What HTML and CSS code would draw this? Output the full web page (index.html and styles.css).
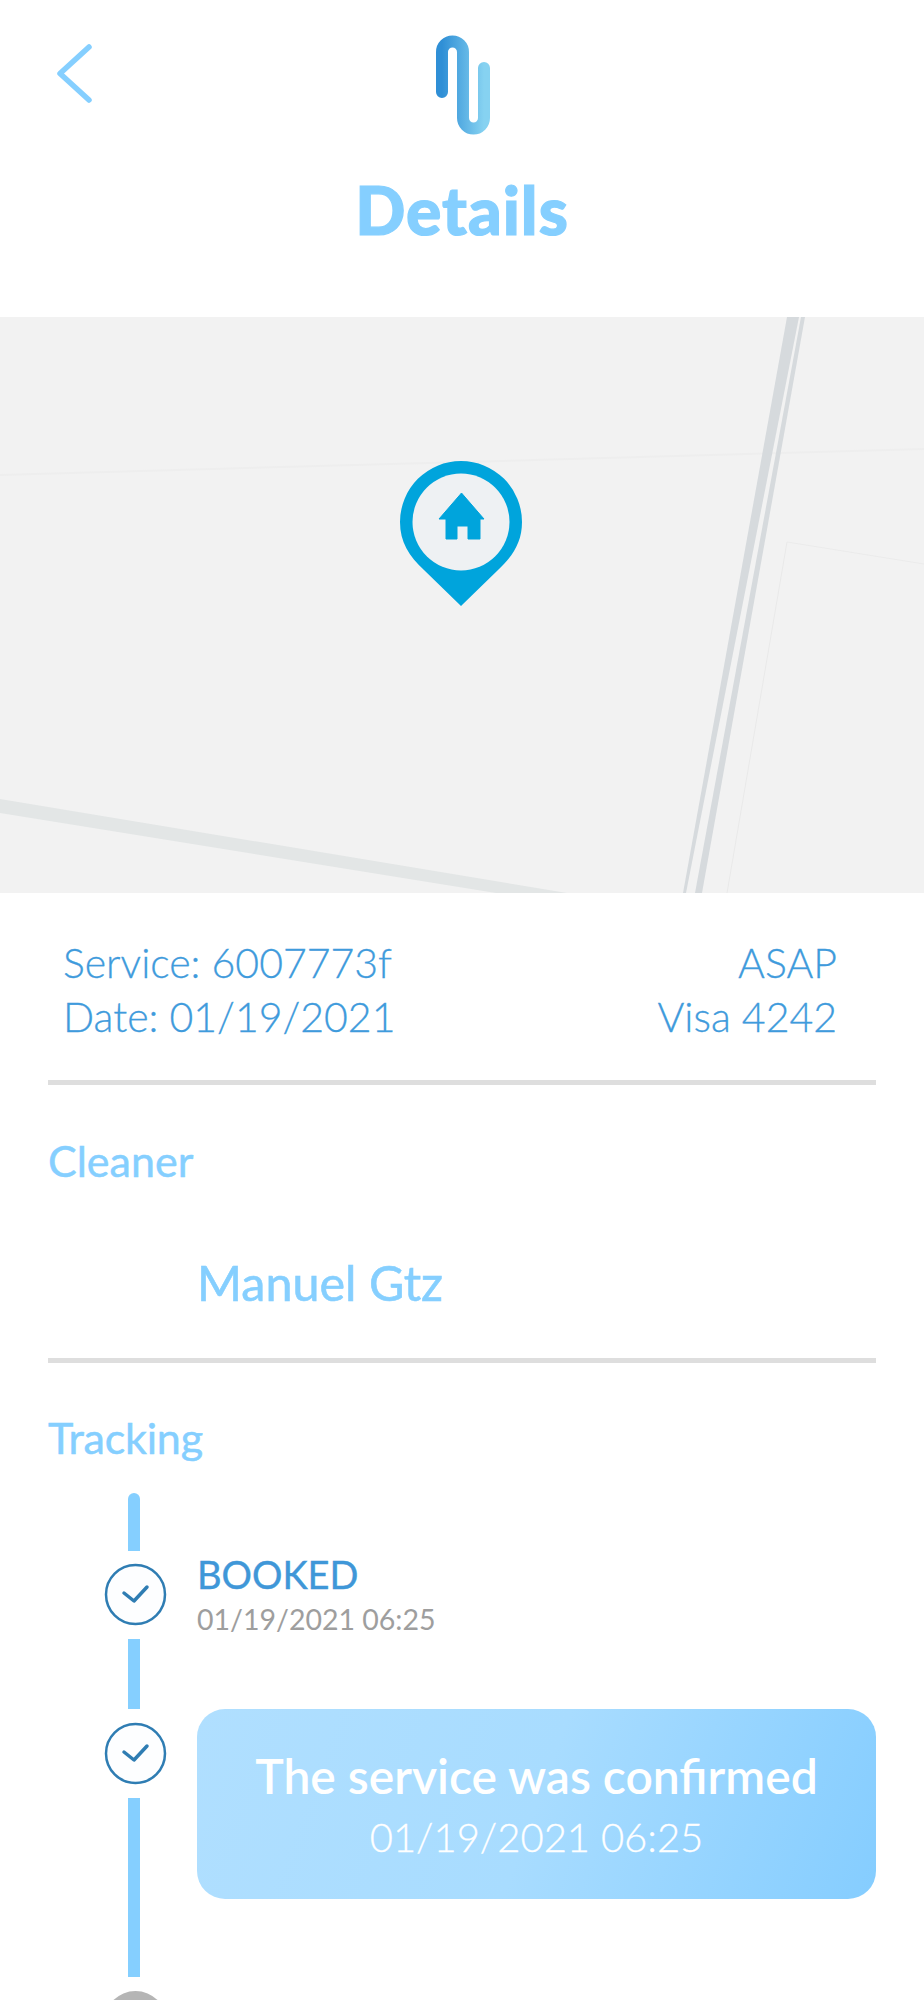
FILE: index.html
```html
<!DOCTYPE html>
<html lang="en">
<head>
    <meta charset="UTF-8">
    <meta name="viewport" content="width=device-width, initial-scale=1.0">
    <title>Details</title>
    <link rel="stylesheet" href="styles.css">
</head>
<body>
    <div class="screen">
        <header class="header">
            <svg class="back" width="40" height="66" viewBox="0 0 40 66">
                <path d="M34 7 L5 33.5 L34 60" transform="translate(0 -1)" fill="none" stroke="#85cfff" stroke-width="5.5" stroke-linecap="round" stroke-linejoin="round"/>
            </svg>
            <svg class="logo" width="56" height="100" viewBox="0 0 56 100">
                <defs>
                    <linearGradient id="logoGrad" x1="0" y1="0" x2="1" y2="0">
                        <stop offset="0" stop-color="#2f8fd6"/>
                        <stop offset="1" stop-color="#86d2f1"/>
                    </linearGradient>
                </defs>
                <path d="M6 57 V17 A10.5 10.5 0 0 1 27 17 V83 A10.5 10.5 0 0 0 48 83 V33" fill="none" stroke="url(#logoGrad)" stroke-width="12" stroke-linecap="round"/>
            </svg>
            <h1 class="title">Details</h1>
        </header>

        <div class="map">
            <svg class="map-roads" width="924" height="576" viewBox="0 0 924 576">
                <path d="M0 158 L924 132" stroke="#eeeeee" stroke-width="2" fill="none"/>
                <path d="M787 225 L924 247" stroke="#ebebeb" stroke-width="1" fill="none"/>
                <path d="M787 225 L727 576" stroke="#e9e9e9" stroke-width="1" fill="none"/>
                <polygon points="787,0 799,0 686,576 683,576" fill="#d6dadd"/>
                <polygon points="801,0 805,0 702,576 695,576" fill="#d6dadd"/>
                <polygon points="0,482 567,576 496,576 0,496" fill="#e3e6e6"/>
            </svg>
            <svg class="map-pin" width="124" height="148" viewBox="0 -2 124 148">
                <path d="M62 144 L25 108 C10 94 1 80 1 60 A61 61 0 1 1 123 60 C123 80 114 94 99 108 Z" fill="#00a4dc"/>
                <circle cx="62" cy="60" r="48.5" fill="#eef1f3"/>
                <path d="M62.5 31 L85 57 H81 V77 H69 V64 H58 V77 H47 V57 H40 Z" fill="#00a4dc" stroke="#00a4dc" stroke-width="1" stroke-linejoin="round"/>
            </svg>
        </div>

        <section class="info">
            <div class="info-row"><span>Service: 6007773f</span><span>ASAP</span></div>
            <div class="info-row"><span>Date: 01/19/2021</span><span>Visa 4242</span></div>
        </section>

        <hr class="divider">

        <section class="cleaner">
            <h2 class="section-title">Cleaner</h2>
            <p class="cleaner-name">Manuel Gtz</p>
        </section>

        <hr class="divider">

        <section class="tracking">
            <h2 class="section-title">Tracking</h2>

            <div class="step">
                <div class="rail">
                    <div class="bar bar-first"></div>
                    <svg class="check" width="63" height="63" viewBox="0 0 63 63">
                        <circle cx="31.5" cy="31.5" r="29.5" fill="#fdfeff" stroke="#2f7db3" stroke-width="2.5"/>
                        <path d="M20 30 L30 38 L43 24" fill="none" stroke="#2f7db3" stroke-width="3.5" stroke-linecap="round" stroke-linejoin="round"/>
                    </svg>
                    <div class="bar bar-mid"></div>
                </div>
                <div class="step-text">
                    <div class="step-name">BOOKED</div>
                    <div class="step-date">01/19/2021 06:25</div>
                </div>
            </div>

            <div class="step">
                <div class="rail">
                    <svg class="check check-next" width="63" height="63" viewBox="0 0 63 63">
                        <circle cx="31.5" cy="31.5" r="29.5" fill="#fdfeff" stroke="#2f7db3" stroke-width="2.5"/>
                        <path d="M20 30 L30 38 L43 24" fill="none" stroke="#2f7db3" stroke-width="3.5" stroke-linecap="round" stroke-linejoin="round"/>
                    </svg>
                    <div class="bar bar-long"></div>
                    <div class="dot-pending"></div>
                </div>
                <div class="step-card">
                    <div class="card-name">The service was confirmed</div>
                    <div class="card-date">01/19/2021 06:25</div>
                </div>
            </div>
        </section>
    </div>
</body>
</html>
```

FILE: styles.css
```css
*{
    padding: 0;
    margin: 0;
    box-sizing: border-box;
    font-family: "Lato", "Open Sans", sans-serif;
}
body{
    background: #ffffff;
}
.screen{
    height: 2000px;
    overflow: hidden;
    position: relative;
}

/* header */
.header{
    height: 317px;
    padding-top: 35px;
    display: flex;
    flex-direction: column;
    align-items: center;
    position: relative;
}
.back{
    position: absolute;
    left: 55px;
    top: 41px;
}
.logo{
    margin-left: 4px;
    display: block;
}
.title{
    margin-top: 38px;
    font-size: 66px;
    line-height: 74px;
    font-weight: 900;
    letter-spacing: 1px;
    color: #85cfff;
    -webkit-text-stroke: 1.2px #85cfff;
}

/* map */
.map{
    height: 576px;
    background: #f2f2f2;
    position: relative;
    overflow: hidden;
}
.map-roads{
    display: block;
}
.map-pin{
    position: absolute;
    left: 399px;
    top: 143px;
}

/* service info */
.info{
    padding: 43px 87px 0 63px;
    height: 187px;
}
.info-row{
    display: flex;
    justify-content: space-between;
    font-size: 41px;
    line-height: 54px;
    font-weight: 300;
    color: #3f9bdc;
    -webkit-text-stroke: 0.3px #3f9bdc;
}
.divider{
    border: none;
    height: 5px;
    margin: 0 48px;
    background: #dedede;
}

.section-title{
    font-size: 43px;
    line-height: 48px;
    font-weight: 400;
    color: #85cfff;
    -webkit-text-stroke: 0.5px #85cfff;
}
.cleaner{
    height: 273px;
    padding: 52px 48px 0;
}
.cleaner-name{
    margin-top: 69px;
    padding-left: 149px;
    font-size: 48.5px;
    line-height: 56px;
    color: #85cfff;
    -webkit-text-stroke: 0.6px #85cfff;
}

/* timeline */
.tracking{
    padding: 51px 48px 0;
}
.tracking .section-title{
    margin-bottom: 31px;
    letter-spacing: -0.2px;
}
.step{
    display: flex;
    gap: 30px;
    padding-left: 56px;
}
.rail{
    width: 63px;
    flex-shrink: 0;
    display: flex;
    flex-direction: column;
    align-items: center;
}
.bar{
    width: 12px;
    margin-left: -3px;
    background: #85cfff;
}
.bar-first{
    height: 58px;
    border-radius: 6px 6px 0 0;
}
.bar-mid{
    height: 70px;
}
.bar-long{
    height: 179px;
}
.check{
    display: block;
    margin: 12px 0 13px;
}
.check-next{
    margin-top: 13px;
}
.dot-pending{
    width: 63px;
    height: 63px;
    flex-shrink: 0;
    margin-top: 14px;
    border-radius: 50%;
    background: #b5b5b5;
}
.step-text{
    padding-top: 59px;
}
.step-name{
    font-size: 38px;
    line-height: 44px;
    color: #3f97d8;
    -webkit-text-stroke: 0.4px #3f97d8;
}
.step-date{
    margin-top: 4px;
    font-size: 28.5px;
    line-height: 38px;
    font-weight: 400;
    color: #9e9e9e;
}
.step-card{
    flex: 1;
    height: 190px;
    padding-top: 39px;
    border-radius: 28px;
    background: linear-gradient(110deg, #b0dfff 0%, #a8dcff 50%, #85cdff 100%);
    text-align: center;
    color: #ffffff;
}
.card-name{
    font-size: 48px;
    line-height: 56px;
    font-weight: 600;
}
.card-date{
    margin-top: 10px;
    font-size: 40px;
    line-height: 46px;
    font-weight: 300;
    -webkit-text-stroke: 0.3px #ffffff;
}
```
